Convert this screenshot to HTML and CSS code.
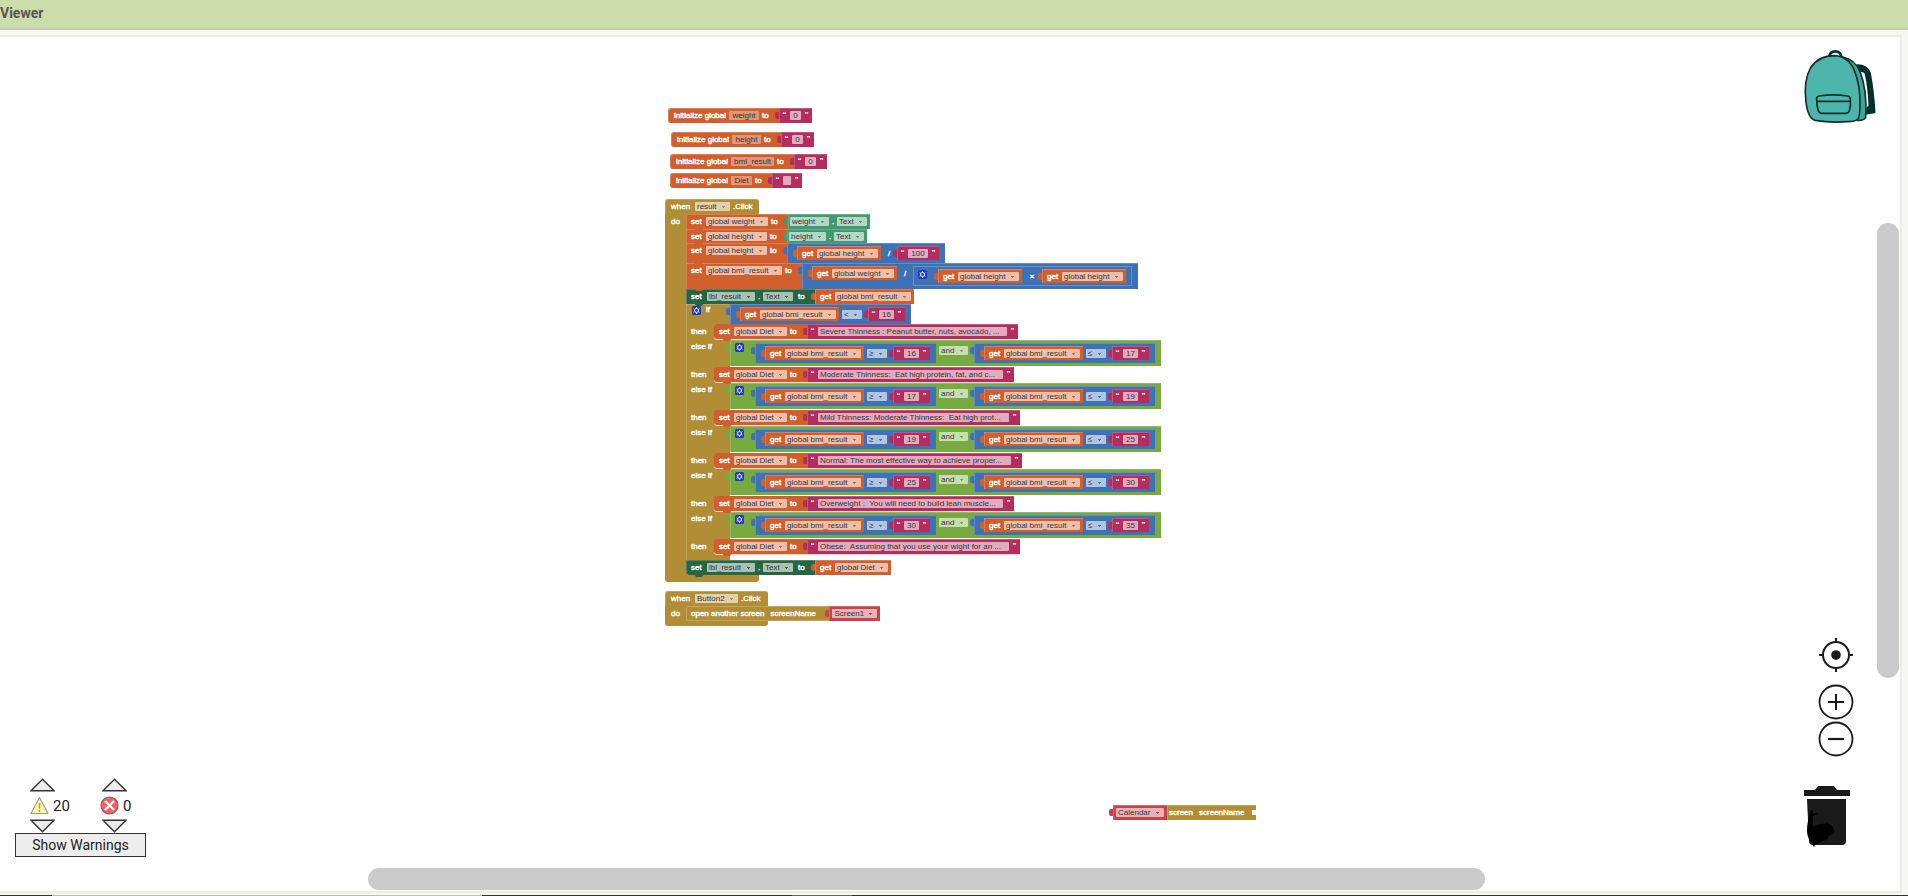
FILE: index.html
```html
<!DOCTYPE html>
<html lang="en">
<head>
<meta charset="utf-8">
<title>Viewer</title>
<link rel="stylesheet" href="styles.css">
</head>
<body>
<svg class="defs" aria-hidden="true">
  <symbol id="gear" viewBox="0 0 9 9"><rect width="9" height="9" rx="1.5" fill="#2238c4"/><circle cx="4.500" cy="4.500" r="2" fill="none" stroke="#cdd6ff" stroke-width="1.200"/><path d="M4.500 1v1.200M4.500 6.800V8M1.500 2.700l1 .6M6.500 5.700l1 .6M1.500 6.300l1-.6M6.500 3.300l1-.6" stroke="#cdd6ff" stroke-width="1"/></symbol>
</svg>
<header class="bar"><h1>Viewer</h1></header>
<main class="workspace">

  <section class="top init-weight">
    <div class="block orange solo"><span class="t init">initialize global</span><input class="name n30" aria-label="Variable name" value="weight"><span class="t to">to</span>
      <div class="block pink tab"><span class="q">“</span><input class="text w11" aria-label="Text" value="0"><span class="q">”</span></div></div>
  </section>
  <section class="top init-height">
    <div class="block orange solo"><span class="t init">initialize global</span><input class="name n29" aria-label="Variable name" value="height"><span class="t to">to</span>
      <div class="block pink tab"><span class="q">“</span><input class="text w11" aria-label="Text" value="0"><span class="q">”</span></div></div>
  </section>
  <section class="top init-bmi">
    <div class="block orange solo"><span class="t init">initialize global</span><input class="name n43" aria-label="Variable name" value="bmi_result"><span class="t to">to</span>
      <div class="block pink tab"><span class="q">“</span><input class="text w11" aria-label="Text" value="0"><span class="q">”</span></div></div>
  </section>
  <section class="top init-diet">
    <div class="block orange solo"><span class="t init">initialize global</span><input class="name n21" aria-label="Variable name" value="Diet"><span class="t to">to</span>
      <div class="block pink tab"><span class="q">“</span><input class="text w8" aria-label="Text" value=""><span class="q">”</span></div></div>
  </section>

  <section class="top event result-click">
    <div class="block gold head"><span class="t when">when</span><select aria-label="Component"><option>result</option></select><span class="t click">.Click</span></div>
    <div class="body">
      <span class="t do">do</span>
      <div class="stack">
        <div class="block orange notch"><span class="t set">set</span><select aria-label="Variable"><option>global weight</option></select><span class="t to">to</span>
          <div class="block teal tab"><select aria-label="Component"><option>weight</option></select><span class="t dot">.</span><select aria-label="Property"><option>Text</option></select></div></div>
        <div class="block orange notch short"><span class="t set">set</span><select aria-label="Variable"><option>global height</option></select><span class="t to">to</span>
          <div class="block teal tab"><select aria-label="Component"><option>height</option></select><span class="t dot">.</span><select aria-label="Property"><option>Text</option></select></div></div>
        <div class="block orange notch"><span class="t set">set</span><select aria-label="Variable"><option>global height</option></select><span class="t to">to</span>
          <div class="block blue tab math"><div class="block orange tab"><span class="t get">get</span><select aria-label="Variable"><option>global height</option></select></div><span class="t op">/</span><div class="block pink tab"><span class="q">“</span><input class="text w20" aria-label="Text" value="100"><span class="q">”</span></div></div></div>
        <div class="block orange notch"><span class="t set">set</span><select aria-label="Variable"><option>global bmi_result</option></select><span class="t to">to</span>
          <div class="block blue tab math"><div class="block orange tab"><span class="t get">get</span><select aria-label="Variable"><option>global weight</option></select></div><span class="t op">/</span>
            <div class="block blue tab product"><svg class="gear"><use href="#gear"/></svg><div class="block orange tab"><span class="t get">get</span><select aria-label="Variable"><option>global height</option></select></div><span class="t times">×</span><div class="block orange tab"><span class="t get">get</span><select aria-label="Variable"><option>global height</option></select></div></div></div></div>
        <div class="block forest notch"><span class="t set wide">set</span><select aria-label="Component"><option>lbl_result</option></select><span class="t dot">.</span><select aria-label="Property"><option>Text</option></select><span class="t to wide">to</span>
          <div class="block orange tab"><span class="t get">get</span><select aria-label="Variable"><option>global bmi_result</option></select></div></div>

        <div class="choice">
          <div class="test"><svg class="gear"><use href="#gear"/></svg><span class="t if">if</span>
            <div class="block blue tab math"><div class="block orange tab"><span class="t get">get</span><select aria-label="Variable"><option>global bmi_result</option></select></div><select class="cmp" aria-label="Comparison"><option>&lt;</option></select><div class="block pink tab"><span class="q">“</span><input class="text w15" aria-label="Text" value="16"><span class="q">”</span></div></div></div>
          <div class="then first"><span class="t branch">then</span><div class="block orange notch inner"><span class="t set">set</span><select aria-label="Variable"><option>global Diet</option></select><span class="t to">to</span>
            <div class="block pink tab"><span class="q">“</span><input class="text long w189" aria-label="Text" value="Severe Thinness : Peanut butter, nuts, avocado, ..."><span class="q">”</span></div></div></div>

          <div class="test"><span class="t elseif">else if</span>
            <div class="block green tab logic"><svg class="gear"><use href="#gear"/></svg><div class="block blue tab math"><div class="block orange tab"><span class="t get">get</span><select aria-label="Variable"><option>global bmi_result</option></select></div><select class="cmp" aria-label="Comparison"><option>≥</option></select><div class="block pink tab"><span class="q">“</span><input class="text w15" aria-label="Text" value="16"><span class="q">”</span></div></div><select class="cmp" aria-label="Logic"><option>and</option></select><div class="block blue tab math"><div class="block orange tab"><span class="t get">get</span><select aria-label="Variable"><option>global bmi_result</option></select></div><select class="cmp" aria-label="Comparison"><option>≤</option></select><div class="block pink tab"><span class="q">“</span><input class="text w15" aria-label="Text" value="17"><span class="q">”</span></div></div></div></div>
          <div class="then"><span class="t branch">then</span><div class="block orange notch inner"><span class="t set">set</span><select aria-label="Variable"><option>global Diet</option></select><span class="t to">to</span>
            <div class="block pink tab"><span class="q">“</span><input class="text long w185" aria-label="Text" value="Moderate Thinness:  Eat high protein, fat, and c..."><span class="q">”</span></div></div></div>

          <div class="test"><span class="t elseif">else if</span>
            <div class="block green tab logic"><svg class="gear"><use href="#gear"/></svg><div class="block blue tab math"><div class="block orange tab"><span class="t get">get</span><select aria-label="Variable"><option>global bmi_result</option></select></div><select class="cmp" aria-label="Comparison"><option>≥</option></select><div class="block pink tab"><span class="q">“</span><input class="text w15" aria-label="Text" value="17"><span class="q">”</span></div></div><select class="cmp" aria-label="Logic"><option>and</option></select><div class="block blue tab math"><div class="block orange tab"><span class="t get">get</span><select aria-label="Variable"><option>global bmi_result</option></select></div><select class="cmp" aria-label="Comparison"><option>≤</option></select><div class="block pink tab"><span class="q">“</span><input class="text w15" aria-label="Text" value="19"><span class="q">”</span></div></div></div></div>
          <div class="then"><span class="t branch">then</span><div class="block orange notch inner"><span class="t set">set</span><select aria-label="Variable"><option>global Diet</option></select><span class="t to">to</span>
            <div class="block pink tab"><span class="q">“</span><input class="text long w191" aria-label="Text" value="Mild Thinness: Moderate Thinness:  Eat high prot..."><span class="q">”</span></div></div></div>

          <div class="test"><span class="t elseif">else if</span>
            <div class="block green tab logic"><svg class="gear"><use href="#gear"/></svg><div class="block blue tab math"><div class="block orange tab"><span class="t get">get</span><select aria-label="Variable"><option>global bmi_result</option></select></div><select class="cmp" aria-label="Comparison"><option>≥</option></select><div class="block pink tab"><span class="q">“</span><input class="text w15" aria-label="Text" value="19"><span class="q">”</span></div></div><select class="cmp" aria-label="Logic"><option>and</option></select><div class="block blue tab math"><div class="block orange tab"><span class="t get">get</span><select aria-label="Variable"><option>global bmi_result</option></select></div><select class="cmp" aria-label="Comparison"><option>≤</option></select><div class="block pink tab"><span class="q">“</span><input class="text w15" aria-label="Text" value="25"><span class="q">”</span></div></div></div></div>
          <div class="then"><span class="t branch">then</span><div class="block orange notch inner"><span class="t set">set</span><select aria-label="Variable"><option>global Diet</option></select><span class="t to">to</span>
            <div class="block pink tab"><span class="q">“</span><input class="text long w193" aria-label="Text" value="Normal: The most effective way to achieve proper..."><span class="q">”</span></div></div></div>

          <div class="test"><span class="t elseif">else if</span>
            <div class="block green tab logic"><svg class="gear"><use href="#gear"/></svg><div class="block blue tab math"><div class="block orange tab"><span class="t get">get</span><select aria-label="Variable"><option>global bmi_result</option></select></div><select class="cmp" aria-label="Comparison"><option>≥</option></select><div class="block pink tab"><span class="q">“</span><input class="text w15" aria-label="Text" value="25"><span class="q">”</span></div></div><select class="cmp" aria-label="Logic"><option>and</option></select><div class="block blue tab math"><div class="block orange tab"><span class="t get">get</span><select aria-label="Variable"><option>global bmi_result</option></select></div><select class="cmp" aria-label="Comparison"><option>≤</option></select><div class="block pink tab"><span class="q">“</span><input class="text w15" aria-label="Text" value="30"><span class="q">”</span></div></div></div></div>
          <div class="then"><span class="t branch">then</span><div class="block orange notch inner"><span class="t set">set</span><select aria-label="Variable"><option>global Diet</option></select><span class="t to">to</span>
            <div class="block pink tab"><span class="q">“</span><input class="text long w185" aria-label="Text" value="Overweight :  You will need to build lean muscle..."><span class="q">”</span></div></div></div>

          <div class="test"><span class="t elseif">else if</span>
            <div class="block green tab logic"><svg class="gear"><use href="#gear"/></svg><div class="block blue tab math"><div class="block orange tab"><span class="t get">get</span><select aria-label="Variable"><option>global bmi_result</option></select></div><select class="cmp" aria-label="Comparison"><option>≥</option></select><div class="block pink tab"><span class="q">“</span><input class="text w15" aria-label="Text" value="30"><span class="q">”</span></div></div><select class="cmp" aria-label="Logic"><option>and</option></select><div class="block blue tab math"><div class="block orange tab"><span class="t get">get</span><select aria-label="Variable"><option>global bmi_result</option></select></div><select class="cmp" aria-label="Comparison"><option>≤</option></select><div class="block pink tab"><span class="q">“</span><input class="text w15" aria-label="Text" value="35"><span class="q">”</span></div></div></div></div>
          <div class="then"><span class="t branch">then</span><div class="block orange notch inner"><span class="t set">set</span><select aria-label="Variable"><option>global Diet</option></select><span class="t to">to</span>
            <div class="block pink tab"><span class="q">“</span><input class="text long w191" aria-label="Text" value="Obese:  Assuming that you use your wight for an ..."><span class="q">”</span></div></div></div>
        </div>

        <div class="block forest notch last"><span class="t set wide">set</span><select aria-label="Component"><option>lbl_result</option></select><span class="t dot">.</span><select aria-label="Property"><option>Text</option></select><span class="t to wide">to</span>
          <div class="block orange tab"><span class="t get">get</span><select aria-label="Variable"><option>global Diet</option></select></div></div>
      </div>
    </div>
    <div class="foot"></div>
  </section>

  <section class="top event button-click">
    <div class="block gold head"><span class="t when">when</span><select aria-label="Component"><option>Button2</option></select><span class="t click">.Click</span></div>
    <div class="body">
      <span class="t do">do</span>
      <div class="stack">
        <div class="block gold notch open"><span class="t">open another screen</span><span class="t arg">screenName</span>
          <div class="block red tab"><select aria-label="Screen"><option>Screen1</option></select></div></div>
      </div>
    </div>
    <div class="foot"></div>
  </section>

  <section class="top stray">
    <div class="block red tab"><select aria-label="Screen"><option>Calendar</option></select></div>
    <div class="block gold rest"><span class="t">screen</span><span class="t arg">screenName</span></div>
  </section>

  <button class="backpack" aria-label="Backpack">
    <svg viewBox="60 50 240 240">
      <path d="M232 104Q262 104 270 128Q280 180 284 246L260 250L262 232L268 228Q266 170 256 128Q250 120 236 122Z" fill="#04302a" stroke="#04302a" stroke-width="5" stroke-linejoin="round"/>
      <path d="M148 78Q150 63 166 63Q182 63 184 80" fill="none" stroke="#04302a" stroke-width="8"/>
      <path d="M188 80Q226 88 240 124Q262 180 257 262Q252 271 232 270Z" fill="#3fa59a" stroke="#12302e" stroke-width="5"/>
      <path d="M78 216Q70 150 92 112Q116 76 164 76Q204 78 222 118Q242 166 240 226Q240 256 234 266Q226 274 202 274Q150 278 106 270Q84 264 78 216Z" fill="#4db5ab" stroke="#12302e" stroke-width="5"/>
      <path d="M110 206Q108 199 118 197Q160 190 202 197Q212 199 211 206Q213 226 208 242Q206 248 198 249L126 249Q117 248 115 241Q109 222 110 206ZM110 213H211" fill="none" stroke="#12302e" stroke-width="5"/>
    </svg>
  </button>

  <div class="zoom">
    <button aria-label="Center"><svg viewBox="0 0 36 36"><circle cx="18" cy="18" r="13" fill="none" stroke="#1b1b1b" stroke-width="2"/><circle cx="18" cy="18" r="4.800" fill="#1b1b1b"/><path d="M18 1v5M18 30v5M1 18h5M30 18h5" stroke="#1b1b1b" stroke-width="2"/></svg></button>
    <button aria-label="Zoom in"><svg viewBox="0 0 36 36"><circle cx="18" cy="18" r="16.500" fill="none" stroke="#1b1b1b" stroke-width="1.800"/><path d="M18 10v16M10 18h16" stroke="#1b1b1b" stroke-width="2"/></svg></button>
    <button aria-label="Zoom out"><svg viewBox="0 0 36 36"><circle cx="18" cy="18" r="16.500" fill="none" stroke="#1b1b1b" stroke-width="1.800"/><path d="M10 18h16" stroke="#1b1b1b" stroke-width="2.200"/></svg></button>
  </div>
  <button class="trash" aria-label="Trash"><svg viewBox="0 0 48 62">
    <path d="M1 4h11l3-4h16l3 4h13v6H1Z" fill="#1a1a1a"/><path d="M4 13h39v42q0 4-4 4H10q-4 0-4-4Z" fill="#1a1a1a"/>
    <path d="M8 24l2 1 0 3 4-1v1l-4 2v11q7-4 12-3 2-2 7 2 4 5 1 8-5 1-5 5-6 2-13 6l-1 2q-7-9-7-16 0-10 4-21Z" fill="#000"/></svg></button>

  <div class="scroll-x" aria-hidden="true"></div>
  <div class="scroll-y" aria-hidden="true"></div>

  <div class="warnings">
    <div class="counts">
      <div class="count">
        <button aria-label="Previous warning"><svg viewBox="0 0 24 13"><path d="M12 1L23 12H1Z" fill="#ededed" stroke="#333" stroke-width="1.300"/></svg></button>
        <span class="tally"><svg class="mark" viewBox="0 0 19 19"><path d="M9.500 1.500L18 17.500H1Z" fill="#ffff99" stroke="#999" stroke-width="1.200" stroke-linejoin="round"/><path d="M9.500 7v5.500M9.500 14v2" stroke="#999" stroke-width="1.600"/></svg>20</span>
        <button aria-label="Next warning"><svg viewBox="0 0 24 13"><path d="M12 12L1 1H23Z" fill="#ededed" stroke="#333" stroke-width="1.300"/></svg></button>
      </div>
      <div class="count">
        <button aria-label="Previous error"><svg viewBox="0 0 24 13"><path d="M12 1L23 12H1Z" fill="#ededed" stroke="#333" stroke-width="1.300"/></svg></button>
        <span class="tally shift"><svg class="mark" viewBox="0 0 19 19"><circle cx="9.500" cy="9.500" r="8.500" fill="#f95d5f" stroke="#7d6565" stroke-width="1.200"/><path d="M5 5l9 9M14 5l-9 9" stroke="#fff" stroke-width="2.400"/></svg>0</span>
        <button aria-label="Next error"><svg viewBox="0 0 24 13"><path d="M12 12L1 1H23Z" fill="#ededed" stroke="#333" stroke-width="1.300"/></svg></button>
      </div>
    </div>
    <button class="show">Show Warnings</button>
  </div>
</main>
<div class="edge"></div>
</body>
</html>
```

FILE: styles.css
```css
* { box-sizing: border-box; }
body {
  margin: 0;
  height: 100vh;
  display: flex;
  flex-direction: column;
  overflow: hidden;
  background: #f7f8f1;
  font-family: Roboto, sans-serif;
}
button { padding: 0; border: 0; background: none; cursor: pointer; }
svg { display: block; }
.defs { position: absolute; width: 0; height: 0; }

.bar {
  height: 30px;
  flex: none;
  background: #ccdcaa;
  border-bottom: 2px solid #c3cab5;
}
.bar h1 { margin: 0; font-size: 14px; line-height: 27px; color: #555; }

.workspace {
  position: relative;
  flex: 1;
  margin: 5px 6px 2px 0;
  background: #fff;
  border: 2px solid #ececec;
  border-left: 0;
  overflow: hidden;
}
.edge {
  height: 1px;
  flex: none;
  background: linear-gradient(90deg, #333 52px, #bbb 52px, #bbb 482px, #333 482px, #333 792px, #666 792px, #666 852px, #333 852px);
}

/* Block positions on the canvas */
.top { position: absolute; display: flex; font-family: "Liberation Sans", Arial, sans-serif; }
.init-weight { left: 668px; top: 71px; }
.init-height { left: 671px; top: 95px; }
.init-bmi { left: 670px; top: 117px; }
.init-diet { left: 670px; top: 136px; }
.result-click { left: 665px; top: 162px; }
.button-click { left: 665px; top: 554px; }
.stray { left: 1113px; top: 768px; }

.block {
  position: relative;
  display: flex;
  flex: none;
  align-items: stretch;
  min-height: 14px;
  background: var(--c);
  box-shadow: inset 1px 1px 0 rgba(255, 255, 255, 0.2);
}
.orange { --c: #d05f2d; }
.pink { --c: #b32d5e; }
.gold { --c: #b18e35; }
.blue { --c: #3f71b5; }
.green { --c: #77ab41; }
.teal { --c: #439970; padding: 0 3px 0 2px; }
.forest { --c: #266643; }
.red { --c: #c5434a; padding: 0 3px; }

.tab::before {
  content: "";
  position: absolute;
  left: -4px;
  top: 4px;
  width: 4px;
  height: 7px;
  border-radius: 2px 0 0 2px;
  background: var(--c);
}
.tab > .get { padding-left: 5px; width: 20px; }
.tab > .get + select { margin-right: 3px; }

.notch { min-height: 15px; padding-left: 5px; width: max-content; }
.short { min-height: 14px; }
.notch::after {
  content: "";
  position: absolute;
  left: 9px;
  bottom: -2px;
  width: 8px;
  height: 2px;
  border-radius: 0 0 3px 3px;
  background: var(--c);
  z-index: 1;
}
.solo { min-height: 15px; border-radius: 3px 0 0 3px; }

.t {
  flex: none;
  font-size: 8px;
  line-height: 15px;
  height: 14px;
  color: #fff;
  white-space: pre;
  -webkit-text-stroke: 0.4px #fff;
}
.init { padding-left: 6px; width: 61px; }
.set { width: 15px; }
.set.wide { width: 16px; }
.to { margin-left: 3px; width: 17px; }
.to.wide { margin-left: 5px; }
.dot { width: 8px; text-align: center; }
.op { width: 16px; text-align: center; }
.times { width: 20px; text-align: center; }

select, input {
  flex: none;
  align-self: flex-start;
  appearance: none;
  height: 9px;
  margin: 3px 0 0;
  padding: 0 2px;
  border: 0;
  border-radius: 1px;
  background-color: rgba(255, 255, 255, 0.6);
  color: #3b3438;
  font: 8px/9px "Liberation Sans", Arial, sans-serif;
}
select {
  padding-right: 13px;
  background-image: linear-gradient(var(--c), var(--c)), linear-gradient(var(--c), var(--c));
  background-size: 3px 1px, 1px 1px;
  background-position: right 5px top 4px, right 6px top 5px;
  background-repeat: no-repeat;
}
input { text-align: center; padding: 0; }
.name { background-color: rgba(255, 255, 255, 0.35); }
.n30 { width: 30px; }
.n29 { width: 29px; }
.n43 { width: 43px; }
.n21 { width: 21px; }
.w8 { width: 8px; }
.w11 { width: 11px; }
.w15 { width: 15px; }
.w20 { width: 20px; }
.w185 { width: 185px; }
.w189 { width: 189px; }
.w191 { width: 191px; }
.w193 { width: 193px; }
.long { text-align: left; padding-left: 2px; }

.q { width: 11px; flex: none; text-align: center; font-size: 8px; line-height: 14px; font-weight: 700; color: #fff; }

.math { padding: 3px 6px 3px 10px; align-items: flex-start; }
.product { padding: 3px 6px 3px 5px; align-items: flex-start; box-shadow: inset 0 0 0 1px #6a90c8; }
.cmp { margin: 3px 6px 0 3px; }
.gear { width: 9px; height: 9px; flex: none; margin: 3px 11px 0 0; }
.product .gear { margin-top: 1px; }

/* Event block: header, mouth and foot */
.event { flex-direction: column; }
.head { min-height: 15px; width: max-content; padding: 0 6px; border-radius: 3px 3px 0 0; }
.when { width: 24px; }
.click { margin-left: 3px; }
.body { display: flex; background: linear-gradient(#b18e35, #b18e35) 0 0 / 22px 100% no-repeat; }
.do { width: 21px; padding-left: 6px; }
.foot { width: 94px; height: 7px; background: #b18e35; border-radius: 0 0 3px 3px; }
.button-click .foot { width: 103px; height: 5px; }
.button-click .head { width: 103px; }
.result-click .head { width: 94px; }
.last { border-radius: 0 0 0 3px; }

.choice {
  display: flex;
  flex-direction: column;
  gap: 1px;
  padding-bottom: 6px;
  background: linear-gradient(#b18e35, #b18e35) 0 0 / 44px 100% no-repeat;
  box-shadow: inset 1px 1px 0 rgba(255, 255, 255, 0.2);
}
.test, .then { display: flex; }
.first { margin-top: -1px; }
.test > .gear { margin: 2px 5px 0 6px; }
.if { width: 24px; line-height: 12px; }
.elseif { width: 44px; padding-left: 5px; line-height: 13px; }
.branch { width: 28px; padding-left: 5px; }
.inner { border-radius: 3px 0 0 3px; box-shadow: 0 1px 0 #f3d7c8; }
.logic { padding: 3px 6px 3px 5px; align-items: flex-start; }
.logic > .gear { margin-top: 0; }

.open { box-shadow: inset 0 0 0 1px #c3a65c; border-radius: 2px; }
.arg { margin-left: 6px; width: 59px; }
.rest { padding-left: 2px; min-height: 15px; }
.rest .arg { width: 57px; }
.rest::after {
  content: "";
  position: absolute;
  right: 0;
  top: 5px;
  width: 4px;
  height: 5px;
  background: #fff;
}

/* Controls over the canvas */
.backpack { position: absolute; top: 10px; right: 20px; width: 80px; height: 80px; }
.zoom { position: absolute; right: 46px; bottom: 133px; display: flex; flex-direction: column; width: 36px; }
.zoom svg { width: 36px; height: 36px; }
.zoom button { display: flex; height: 37px; }
.zoom button:first-child { height: 47px; }
.trash { position: absolute; right: 49px; bottom: 43px; width: 48px; height: 62px; }
.scroll-x { position: absolute; left: 368px; right: 415px; bottom: 1px; height: 22px; border-radius: 11px; background: #cbcbcb; }
.scroll-y { position: absolute; right: 1px; top: 186px; bottom: 213px; width: 22px; border-radius: 11px; background: #cbcbcb; }

.warnings { position: absolute; left: 15px; bottom: 34px; width: 131px; }
.counts { display: flex; gap: 10px; padding-left: 15px; }
.count { width: 62px; flex: none; }
.count button { display: block; width: 25px; height: 14px; }
.count button svg { width: 25px; height: 14px; }
.tally { display: flex; align-items: center; gap: 4px; height: 27px; font-size: 15px; color: #222; }
.shift { margin-left: -2px; }
.mark { width: 19px; height: 19px; }
.show { display: block; width: 100%; height: 24px; border: 1px solid #333; background: #ededed; font: 14px Roboto, sans-serif; color: #222; }
```
